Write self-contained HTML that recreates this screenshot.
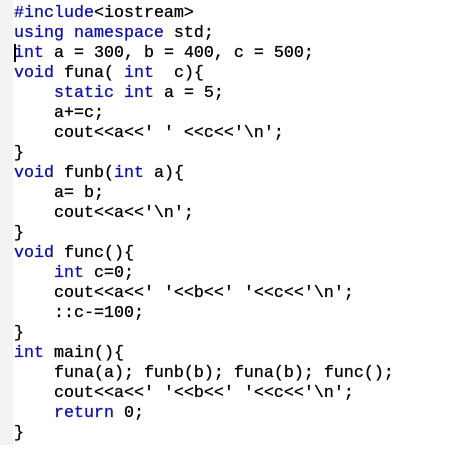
<!DOCTYPE html>
<html><head><style>
html,body{margin:0;padding:0;background:#fff;width:468px;height:457px;overflow:hidden}
.m{position:absolute;left:0;top:0;width:13px;height:445px;background:#f3f3f3}
pre{position:absolute;left:14px;top:4px;margin:0;font-family:"Liberation Mono",monospace;font-size:16.67px;line-height:20px;color:#000;-webkit-text-stroke:0.3px #000}
b{font-weight:normal;color:#1010a8;-webkit-text-stroke:0.3px #1010a8}
.c{position:absolute;left:14px;top:44px;width:2px;height:18px;background:#000}
</style></head><body>
<div class="m"></div>
<pre><b>#include</b>&lt;iostream&gt;
<b>using namespace</b> std;
<b>int</b> a = 300, b = 400, c = 500;
<b>void</b> funa( <b>int</b>  c){
    <b>static int</b> a = 5;
    a+=c;
    cout&lt;&lt;a&lt;&lt;' ' &lt;&lt;c&lt;&lt;'\n';
}
<b>void</b> funb(<b>int</b> a){
    a= b;
    cout&lt;&lt;a&lt;&lt;'\n';
}
<b>void</b> func(){
    <b>int</b> c=0;
    cout&lt;&lt;a&lt;&lt;' '&lt;&lt;b&lt;&lt;' '&lt;&lt;c&lt;&lt;'\n';
    ::c-=100;
}
<b>int</b> main(){
    funa(a); funb(b); funa(b); func();
    cout&lt;&lt;a&lt;&lt;' '&lt;&lt;b&lt;&lt;' '&lt;&lt;c&lt;&lt;'\n';
    <b>return</b> 0;
}</pre>
<div class="c"></div>
</body></html>
